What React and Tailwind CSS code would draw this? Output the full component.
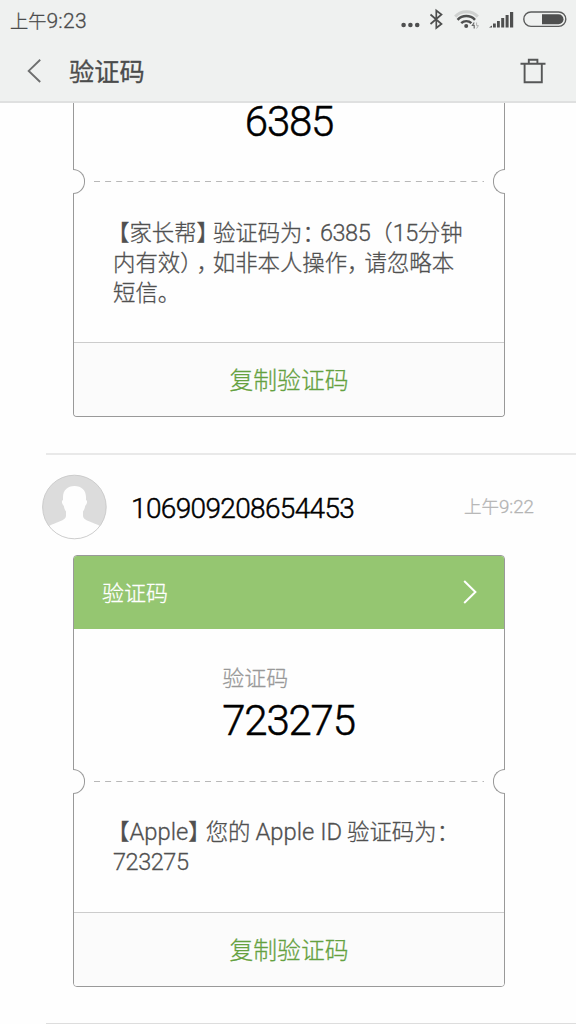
import React from 'react';

const StatusIcons = () => (
  <svg className="w-[170px] h-[24px]" viewBox="400 8 170 24" fill="none">
    <g fill="#4e4f4f">
      <circle cx="403.6" cy="25" r="2.3" />
      <circle cx="410.4" cy="25" r="2.3" />
      <circle cx="417.2" cy="25" r="2.3" />
    </g>
    <path d="M430.5 14.5L441.5 24L436.3 28V10.5L441.5 14.5L430.5 24" stroke="#4e4f4f" strokeWidth="1.7" />
    {/* wifi */}
    <path d="M455.2 16.6A15.5 15.5 0 0 1 477.8 16.6" stroke="#cfd1d0" strokeWidth="3" />
    <path d="M457.6 19.8A12 12 0 0 1 475 19.8" stroke="#4e4f4f" strokeWidth="2.6" />
    <path d="M461.2 23.2A7.2 7.2 0 0 1 471.4 23.2" stroke="#4e4f4f" strokeWidth="2.4" />
    <circle cx="466.2" cy="26" r="2" fill="#4e4f4f" />
    <path d="M474.2 22.5L472.4 25.4H474.2V28.5" stroke="#6b6c6c" strokeWidth="1.2" />
    <path d="M476.6 28.5L478.4 25.6H476.6V22.5" stroke="#b0b1b1" strokeWidth="1" />
    {/* signal */}
    <g fill="#4e4f4f">
      <path d="M489 27.5L492 25.4V27.5Z" />
      <rect x="493" y="23.5" width="2.8" height="4" />
      <rect x="497" y="21" width="2.8" height="6.5" />
      <rect x="501.2" y="18" width="3" height="9.5" />
      <rect x="505.6" y="15" width="3" height="12.5" />
      <rect x="510" y="12" width="3.2" height="15.5" />
    </g>
    {/* battery */}
    <rect x="523.8" y="12" width="42" height="14.4" rx="7.2" stroke="#5a5b5b" strokeWidth="1.4" />
    <path d="M542 14.2H558.5A5 5 0 0 1 558.5 24.2H542Z" fill="#4e4f4f" />
  </svg>
);

const BackIcon = () => (
  <svg className="w-[14px] h-[24px]" viewBox="0 0 14 24" fill="none">
    <path d="M13.2 0.8L1.7 11.9L13.2 23" stroke="#6e6f6f" strokeWidth="1.9" />
  </svg>
);

const TrashIcon = () => (
  <svg className="w-[26px] h-[26px]" viewBox="0 0 26 26" fill="none" stroke="#565757" strokeWidth="1.9">
    <path d="M0.5 5.7H25.5M8.8 5.2V1.8H17.4V5.2M4.6 6V24.2H21.8V6" />
  </svg>
);

const Avatar = () => (
  <svg className="w-[66px] h-[66px] shrink-0" viewBox="0 0 66 66">
    <circle cx="33.4" cy="33" r="31.8" fill="#dcdcdc" />
    <path
      d="M33.5 12C40.5 12 44.9 16 45 23V26C46 26.4 46.4 27.6 45.8 29.2C45.4 30.6 44.6 31 44.2 32C43.8 34.5 43 36 42 37.6V41.5C42 44.6 44.4 45.8 48 47.2C52 48.8 56.2 50.4 59 52A31.8 31.8 0 0 1 8 52C10.8 50.4 15 48.8 19 47.2C22.6 45.8 25 44.6 25 41.5V37.6C24 36 23.2 34.5 22.8 32C22.4 31 21.6 30.6 21.2 29.2C20.6 27.6 21 26.4 22 26V23C22.1 16 26.5 12 33.5 12Z"
      fill="#fefefe"
    />
    <circle cx="33.4" cy="33" r="31.8" fill="none" stroke="#c8c8c8" strokeWidth="0.9" />
  </svg>
);

// dashed tear line with a notch cut in each side of the card
const TearLine = () => (
  <div className="relative flex h-[25px] items-center justify-center">
    <div className="absolute -left-px top-0 h-[25px] w-[12px] rounded-r-full border border-l-0 border-[#999] bg-[#fefefe]" />
    <svg className="h-px w-[390px]" viewBox="0 0 390 1">
      <line x1="0" y1="0.5" x2="390" y2="0.5" stroke="#b8b8b8" strokeWidth="1" strokeDasharray="6 5.1" />
    </svg>
    <div className="absolute -right-px top-0 h-[25px] w-[12px] rounded-l-full border border-r-0 border-[#999] bg-[#fefefe]" />
  </div>
);

const CopyButton = () => (
  <button className="block h-[74px] w-full rounded-b-[3px] border-t border-[#ccc] bg-[#fbfbfb] pb-px text-center text-[23.8px] font-light text-[#65a13f] [-webkit-text-stroke:0.3px]">
    复制验证码
  </button>
);

const Num = ({ children }) => <span className="font-['Roboto'] text-[23.5px] tracking-[-0.45px]">{children}</span>;

const Latin = ({ children }) => <span className="font-['Roboto'] text-[23.8px]">{children}</span>;

const App = () => {
  return (
    <div className="flex h-[1024px] w-[576px] flex-col overflow-hidden bg-[#fefefe] font-['Noto_Sans_CJK_SC',sans-serif] text-black">
      <header className="h-[103px] shrink-0 border-b-2 border-[#dfe0e0] bg-[#eff1f0] text-[#4b4c4c]">
        <div className="flex h-[40px] items-center justify-between pl-[10px] pr-[6px]">
          <span className="text-[18.2px] font-light leading-[40px] [-webkit-text-stroke:0.3px]">
            上午<span className="font-['Roboto'] text-[21px] tracking-[0.3px]">9:23</span>
          </span>
          <StatusIcons />
        </div>
        <div className="flex h-[61px] items-center pl-[27px] pr-[30px]">
          <BackIcon />
          <h1 className="ml-[28px] flex-1 text-[25.2px] leading-[61px] [-webkit-text-stroke:0.3px]">验证码</h1>
          <TrashIcon />
        </div>
      </header>

      <main className="flex flex-col">
        <section className="ml-[73px] h-[314px] w-[432px] rounded-b-[4px] border border-t-0 border-[#999]">
          <div className="flex h-[66px] justify-center">
            <span className="font-['Roboto'] text-[42px] font-light leading-[38px] tracking-[-1.2px] [-webkit-text-stroke:0.5px]">6385</span>
          </div>
          <TearLine />
          <div className="h-[148px] whitespace-nowrap pl-[39px] pt-[22px] text-[22.4px] font-light leading-[30px] text-[#505050] [-webkit-text-stroke:0.3px]">
            <p className="h-[30px]">
              <span className="-ml-[6px]">【</span>家长帮<span className="tracking-[-6px]">】</span>验证码为
              <span className="tracking-[-5px]">：</span><Num>6385</Num>（<Num>15</Num>分钟
            </p>
            <p className="h-[30px]">
              内有效<span className="tracking-[5px]">）</span><span className="tracking-[-6px]">，</span>如非本人操作
              <span className="tracking-[-5px]">，</span>请忽略本
            </p>
            <p className="h-[30px]">短信。</p>
          </div>
          <CopyButton />
        </section>

        <section className="mt-[36px] h-[570px]">
          <div className="ml-[46px] h-[2px] bg-[#e9e9e9]" />
          <div className="flex h-[100px] items-center pl-[41px] pr-[42px] pt-[4px]">
            <Avatar />
            <span className="ml-[24px] flex-1 pt-[3px] font-['Roboto'] text-[28px] font-light tracking-[-0.65px] [-webkit-text-stroke:0.45px]">106909208654453</span>
            <span className="pt-px text-[17.5px] font-light text-[#b4b4b4] [-webkit-text-stroke:0.3px]">上午<span className="font-['Roboto'] text-[18.7px]">9:22</span></span>
          </div>
          <div className="ml-[73px] h-[432px] w-[432px] rounded-[4px] border border-[#999]">
            <div className="flex h-[73px] items-center justify-between rounded-t-[3px] bg-[#95c671] pb-px pl-[28px] pr-[27px] text-[22px] text-white">
              <span className="pb-px font-light [-webkit-text-stroke:0.3px]">验证码</span>
              <svg className="h-[24px] w-[14px]" viewBox="0 0 14 24" fill="none">
                <path d="M1.2 1L12.4 12L1.2 23" stroke="#fff" strokeWidth="2" />
              </svg>
            </div>
            <div className="flex h-[140px] justify-center">
              <div className="-ml-px pt-[31px]">
                <div className="text-[22px] font-light leading-[32px] text-[#999] [-webkit-text-stroke:0.3px]">验证码</div>
                <div className="pt-[3px] font-['Roboto'] text-[42px] font-light leading-[52px] tracking-[-1.2px] [-webkit-text-stroke:0.5px]">723275</div>
              </div>
            </div>
            <TearLine />
            <div className="h-[118px] whitespace-nowrap pl-[39px] pt-[21px] text-[22.4px] font-light leading-[30px] text-[#505050] [-webkit-text-stroke:0.3px]">
              <p className="h-[30px]">
                <span className="-ml-[6px]">【</span><Latin>Apple</Latin><span className="tracking-[-5px]">】</span>您的 <Latin>Apple ID</Latin> 验证码为：
              </p>
              <p className="h-[30px]"><Num>723275</Num></p>
            </div>
            <CopyButton />
          </div>
        </section>
        <div className="ml-[46px] h-px bg-[#ddd]" />
      </main>
    </div>
  );
};

export default App;
